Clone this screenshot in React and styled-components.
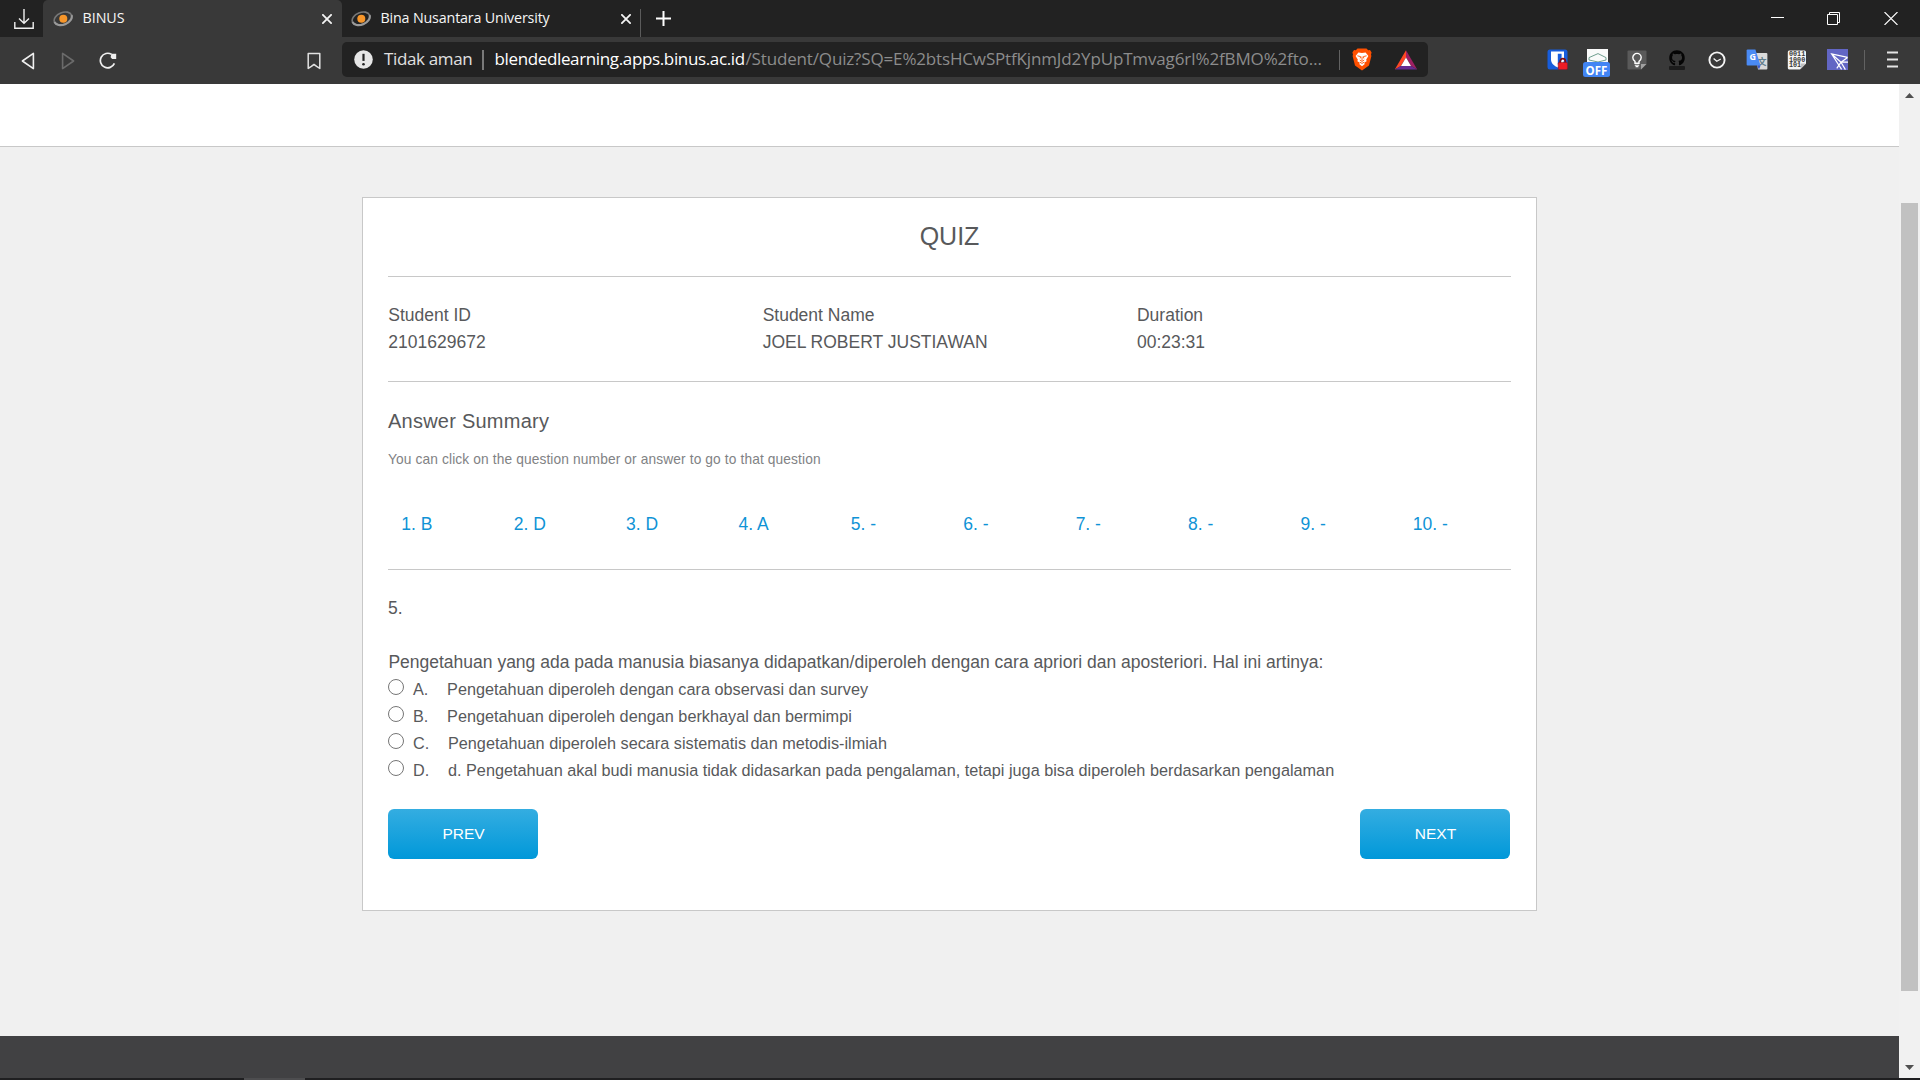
import React from "react";
import styled, { createGlobalStyle } from "styled-components";
import { FaGithub } from "react-icons/fa";

const GlobalStyle = createGlobalStyle`
  * { box-sizing: border-box; }
  html, body { margin: 0; padding: 0; height: 100%; overflow: hidden; }
  body { font-family: "Liberation Sans", Arial, sans-serif; color: #58595b; background: #f0f0f0; }
`;

const Window = styled.div`
  width: 1920px;
  height: 1080px;
  display: flex;
  flex-direction: column;
  overflow: hidden;
`;

/* ---------- browser chrome ---------- */

const TabBar = styled.div`
  display: flex;
  height: 37px;
  background: #222222;
  font-family: "Open Sans", "Noto Sans", sans-serif;
`;

const DownloadSlot = styled.div`
  width: 43px;
  padding: 9px 0 0 14px;
  svg { display: block; }
`;

const Tab = styled.div`
  display: flex;
  align-items: center;
  width: ${(p) => p.$width}px;
  height: 37px;
  padding: 0 ${(p) => p.$padRight}px 0 ${(p) => p.$padLeft}px;
  border-radius: 5px 5px 0 0;
  background: ${(p) => (p.$active ? "#393939" : "transparent")};
  svg { display: block; flex: none; }
`;

const TabTitle = styled.span`
  flex: 1;
  margin-left: 9.5px;
  padding-bottom: 1px;
  font-size: 14.3px;
  line-height: 20px;
  letter-spacing: ${(p) => p.$spacing}px;
  color: #f6f6f6;
  white-space: nowrap;
`;

const TabDivider = styled.div`
  width: 1px;
  height: 28px;
  margin: 9px 0 0 0;
  background: #5b5b5b;
`;

const NewTab = styled.div`
  padding: 11px 0 0 15px;
  svg { display: block; }
`;

const WindowControls = styled.div`
  display: flex;
  gap: 43px;
  margin-left: auto;
  padding: 12px 22px 0 0;
  svg { display: block; }
  svg:last-child { margin-left: 1px; }
`;

const Toolbar = styled.div`
  display: flex;
  align-items: center;
  height: 47px;
  padding: 0 22px 0 8px;
  background: #393939;
  font-family: "Open Sans", "Noto Sans", sans-serif;
  svg { display: block; flex: none; }
`;

const NavSlot = styled.div`
  display: flex;
  justify-content: center;
  width: 40px;
`;

const BookmarkSlot = styled.div`
  display: flex;
  margin-left: 179px;
  width: 34.5px;
`;

const AddressBar = styled.div`
  display: flex;
  align-items: center;
  width: 1086.5px;
  height: 35px;
  margin-bottom: 2px;
  padding: 0 11px 0 12px;
  border-radius: 5px;
  background: #222222;
`;

const AddressText = styled.span`
  flex: none;
  padding-bottom: 1px;
  font-size: 17px;
  line-height: 26px;
  white-space: nowrap;
  letter-spacing: ${(p) => p.$spacing}px;
  color: ${(p) => p.$color};
  width: ${(p) => p.$width}px;
  margin-left: ${(p) => p.$gap || 0}px;
`;

const Separator = styled.div`
  flex: none;
  width: ${(p) => p.$thick || 1}px;
  height: 20px;
  margin: 0 ${(p) => p.$right}px 0 ${(p) => p.$left}px;
  background: ${(p) => p.$color || "#626262"};
`;

const ShieldSlot = styled.div`
  flex: none;
  width: 42px;
`;

const Extensions = styled.div`
  display: flex;
  align-items: center;
  margin-left: auto;
  padding-bottom: 2px;
`;

const ExtensionSlot = styled.div`
  position: relative;
  display: flex;
  justify-content: center;
  align-items: center;
  width: 40px;
  height: 22px;
`;

const Badge = styled.span`
  position: absolute;
  left: 6px;
  top: 13.5px;
  width: 27px;
  height: 15px;
  border-radius: 2.5px;
  background: #4285f4;
  color: #ffffff;
  font-size: 11.5px;
  font-weight: 700;
  line-height: 17px;
  text-align: center;
`;

/* ---------- page ---------- */

const Viewport = styled.div`
  display: flex;
  height: 994px;
`;

const Page = styled.main`
  display: flex;
  flex-direction: column;
  width: 1899px;
  background: #f0f0f0;
`;

const SiteHeader = styled.header`
  height: 63px;
  background: #ffffff;
  border-bottom: 1px solid #c8c8c8;
`;

const Card = styled.section`
  width: 1175px;
  height: 714px;
  margin: 50px auto 0;
  padding: 0 25px;
  border: 1px solid #c8c8c8;
  background: #ffffff;
`;

const Title = styled.h1`
  margin: 0;
  padding-top: 20px;
  height: 79px;
  border-bottom: 1px solid #c8c8c8;
  font-size: 25px;
  font-weight: 400;
  line-height: 36px;
  text-align: center;
`;

const StudentInfo = styled.div`
  display: grid;
  grid-template-columns: repeat(3, 374.33px);
  height: 105px;
  padding: 24.5px 0 0 0.3px;
  border-bottom: 1px solid #c8c8c8;
  font-size: 17.5px;
  line-height: 27px;
`;

const Summary = styled.div`
  height: 188px;
  padding-top: 24px;
  border-bottom: 1px solid #c8c8c8;
`;

const SummaryTitle = styled.h2`
  margin: 0;
  font-size: 20px;
  font-weight: 400;
  line-height: 30px;
  letter-spacing: 0.24px;
`;

const SummaryHint = styled.p`
  margin: 14px 0 0;
  font-size: 13.75px;
  line-height: 20px;
  letter-spacing: 0.12px;
  color: #818284;
`;

const AnswerRow = styled.div`
  display: grid;
  grid-template-columns: repeat(10, 112.4px);
  margin-top: 41.4px;
`;

const AnswerLink = styled.a`
  padding-left: 13.3px;
  font-size: 17.5px;
  line-height: 27px;
  color: #0f93d6;
`;

const Question = styled.div`
  padding-top: 25.4px;
  font-size: 17.5px;
  line-height: 27px;
`;

const QuestionText = styled.div`
  padding-left: 0.4px;
`;

const QuestionNumber = styled.div`
  margin-bottom: 27px;
`;

const Option = styled.label`
  display: flex;
  height: 27px;
  font-size: 16.25px;
  line-height: 27px;
  white-space: nowrap;
`;

const Radio = styled.span`
  width: 16px;
  height: 16px;
  margin: 3px 8.9px 0 0;
  border: 1px solid #767676;
  border-radius: 50%;
`;

const OptionLetter = styled.span`
  margin-right: 18.8px;
`;

const Actions = styled.div`
  display: flex;
  justify-content: space-between;
  width: 1122px;
  margin-top: 24.6px;
`;

const ActionButton = styled.button`
  width: 150px;
  height: 50px;
  padding: 0 0 0 1px;
  border: 0;
  border-radius: 6px;
  background: linear-gradient(#34ade1, #0098d9);
  color: #ffffff;
  font: 15.5px/50px "Liberation Sans", Arial, sans-serif;
`;

const Footer = styled.footer`
  height: 42px;
  margin-top: auto;
  background: #414143;
`;

const Scrollbar = styled.div`
  display: flex;
  flex-direction: column;
  align-items: center;
  width: 21px;
  padding: 9px 0 8px;
  background: #f1f1f1;
  svg { display: block; }
`;

const ScrollThumb = styled.div`
  width: 17px;
  height: 788px;
  margin: 105px 0 auto;
  background: #c1c1c1;
`;

const Taskbar = styled.div`
  height: 2px;
  padding-left: 244px;
  background: #1f1f21;
`;

const TaskbarActive = styled.div`
  width: 61px;
  height: 2px;
  background: #4d4d4f;
`;

/* ---------- icons ---------- */

const Favicon = () => (
  <svg width="20" height="17" viewBox="0 0 20 17">
    <g transform="rotate(-22 10 8.5)" fill="none">
      <ellipse cx="10" cy="8.5" rx="9.2" ry="6" stroke="#777777" strokeWidth="1.6" />
      <path d="M19.2 8.5C19 12 15 14.6 10 14.6 5 14.6 1 12 .8 8.5" stroke="#9a9a9a" strokeWidth="2.1" />
    </g>
    <circle cx="10.3" cy="8.8" r="4" fill="#f7962a" />
  </svg>
);

const DownloadIcon = () => (
  <svg width="20" height="20" viewBox="0 0 20 20" fill="none" stroke="#f0f0f0" strokeWidth="1.4">
    <path d="M10 0V14M5 9.5L10 14.3 15 9.5M.8 13V19.3H19.2V13" />
  </svg>
);

const CloseIcon = () => (
  <svg width="10" height="10" viewBox="0 0 10 10" stroke="#f4f4f4" strokeWidth="1.8">
    <path d="M.3 .3L9.7 9.7M9.7 .3L.3 9.7" />
  </svg>
);

const PlusIcon = () => (
  <svg width="15" height="15" viewBox="0 0 15 15" stroke="#ffffff" strokeWidth="2">
    <path d="M7.5 0V15M0 7.5H15" />
  </svg>
);

const MinimizeIcon = () => (
  <svg width="13" height="13" viewBox="0 0 13 13" stroke="#ffffff">
    <path d="M0 5.5H13" />
  </svg>
);

const RestoreIcon = () => (
  <svg width="13" height="13" viewBox="0 0 13 13" fill="none" stroke="#ffffff">
    <path d="M.5 2.5H10.5V12.5H.5ZM2.5 2.5V.5H12.5V10.5H10.5" />
  </svg>
);

const WindowCloseIcon = () => (
  <svg width="14" height="13" viewBox="0 0 14 13" stroke="#ffffff" strokeWidth="1.1">
    <path d="M.5 0L13.5 13M13.5 0L.5 13" />
  </svg>
);

const BackIcon = () => (
  <svg width="14" height="18" viewBox="0 0 14 18" fill="none" stroke="#f0f0f0" strokeWidth="1.6" strokeLinejoin="round">
    <path d="M12.4 1.4V16.6L1.4 9Z" />
  </svg>
);

const ForwardIcon = () => (
  <svg width="14" height="18" viewBox="0 0 14 18" fill="none" stroke="#6b6b6b" strokeWidth="1.6" strokeLinejoin="round">
    <path d="M1.6 1.4V16.6L12.6 9Z" />
  </svg>
);

const ReloadIcon = () => (
  <svg width="18" height="18" viewBox="0 0 18 18" fill="none">
    <path d="M12.6 2.4A7.3 7.3 0 1 0 15.4 11.4" stroke="#f0f0f0" strokeWidth="1.7" />
    <path d="M12.4 1.8H17.2V6.9H13.2L11.6 5.2Z" fill="#f0f0f0" />
  </svg>
);

const BookmarkIcon = () => (
  <svg width="14" height="18" viewBox="0 0 14 18" fill="none" stroke="#e2e2e2" strokeWidth="1.5" strokeLinejoin="round">
    <path d="M1.2 1.4H12.8V16.4L9.6 14.4 7 12.4 4.4 14.4 1.2 16.4Z" />
  </svg>
);

const WarningIcon = () => (
  <svg width="19" height="19" viewBox="0 0 19 19">
    <circle cx="9.5" cy="9.5" r="9.3" fill="#e6e6e6" />
    <path d="M9.5 3.8V10.9" stroke="#222222" strokeWidth="2.2" />
    <circle cx="9.5" cy="14.2" r="1.3" fill="#222222" />
  </svg>
);

const BraveIcon = () => (
  <svg width="20" height="23" viewBox="0 0 20 23">
    <path d="M5.5.5H14.5L16.2 2.2 18 2 19.6 4.6 19 6.6 19.4 8 17 17.4 10 22.6 3 17.4.6 8 1 6.6.4 4.6 2 2 3.8 2.2Z" fill="#ff5000" />
    <path d="M6.4 4.4L10 5 13.6 4.4 16.4 8 14.2 11.6 14.6 13.2 12.4 14.6 12.6 16.2 10 18.3 7.4 16.2 7.6 14.6 5.4 13.2 5.8 11.6 3.6 8Z" fill="#ffffff" />
    <path d="M5.4 7.8L8.6 8.6 8.2 10.4M14.6 7.8L11.4 8.6 11.8 10.4M10 8.6V12.4M7.8 12L10 13.4 12.2 12M7.8 14.2L10 15.4 12.2 14.2" fill="none" stroke="#ff5000" strokeWidth=".9" />
  </svg>
);

const BatIcon = () => (
  <svg width="24" height="20" viewBox="0 0 24 20">
    <path d="M12 .2L.8 19.6 6.8 16 12 7.4Z" fill="#ff4724" />
    <path d="M12 .2L23.2 19.6 17.2 16 12 7.4Z" fill="#9e1f63" />
    <path d="M.8 19.6H23.2L17.2 16H6.8Z" fill="#662d91" />
    <path d="M12 7.4L17 16H7Z" fill="#ffffff" />
  </svg>
);

const VaultIcon = () => (
  <svg width="21" height="21" viewBox="0 0 21 21">
    <rect x=".5" y=".5" width="20" height="20" rx="2.5" fill="#175ddc" />
    <path d="M4 2.5H17V10.5C17 14.5 13.5 17 10.5 18.4 7.5 17 4 14.5 4 10.5Z" fill="#ffffff" />
    <path d="M10.8 4.7H14.6V10.8C14.6 13 12.8 14.6 10.8 15.8Z" fill="#175ddc" />
    <path d="M13.2 14V12.3A2.6 2.6 0 0 1 18.4 12.3V14" fill="none" stroke="#7d0d12" strokeWidth="1.8" />
    <rect x="11.2" y="13.4" width="9.2" height="7.2" rx="1" fill="#ee1c25" stroke="#8f1015" strokeWidth=".6" />
  </svg>
);

const ScanPageIcon = () => (
  <svg width="21" height="21" viewBox="0 0 21 21">
    <rect width="21" height="21" fill="#fafafa" />
    <path d="M2 8.6L11 4.6 19 8.6V11L11 13 2 11Z" fill="none" stroke="#6f9e8f" strokeWidth="1" />
  </svg>
);

const BulbNoteIcon = () => (
  <svg width="20" height="20" viewBox="0 0 20 20">
    <path d="M1.5.5H18.5Q19.5.5 19.5 1.5V14L14 19.5H1.5Q.5 19.5.5 18.5V1.5Q.5.5 1.5.5Z" fill="#5a5a5a" />
    <path d="M19.5 14H14V19.5Z" fill="#a0a0a0" />
    <path d="M8 13.2V11.4C6.4 10.4 5.8 9.2 5.8 7.6A4.2 4.2 0 0 1 14.2 7.6C14.2 9.2 13.6 10.4 12 11.4V13.2Z" fill="none" stroke="#ffffff" strokeWidth="1.4" />
    <path d="M7.8 15.2H12.2M8.6 16.6H11.4" stroke="#ffffff" strokeWidth="1.1" />
  </svg>
);

const GithubStack = styled.div`
  display: flex;
  flex-direction: column;
  align-items: center;
  color: #050505;
`;

const GithubPlate = styled.span`
  width: 16px;
  height: 4px;
  border-radius: 1px;
  background: #1c1c1c;
`;

const ClockIcon = () => (
  <svg width="18" height="18" viewBox="0 0 18 18" fill="none" stroke="#f4f4f4">
    <circle cx="9" cy="9" r="7.6" strokeWidth="1.9" />
    <path d="M5.6 7.4L8.8 10.2 12.8 8" strokeWidth="1.3" />
  </svg>
);

const GoogleLetter = styled.text`
  font: 700 9px "Open Sans", sans-serif;
  fill: #ffffff;
`;

const CjkLetter = styled.text`
  font: 700 9px "Noto Sans CJK SC", sans-serif;
  fill: #607d8b;
`;

const TranslateIcon = () => (
  <svg width="22" height="21" viewBox="0 0 22 21">
    <path d="M9 4H20.4Q21.4 4 21.4 5V19.6Q21.4 20.6 20.4 20.6H12Z" fill="#dadada" />
    <CjkLetter x="11.6" y="15.5">文</CjkLetter>
    <path d="M1.6.4H9.4L14.6 16.4H1.6Q.6 16.4.6 15.4V1.4Q.6.4 1.6.4Z" fill="#4a8af4" />
    <path d="M11 16.4H14.6L13 20.4Z" fill="#3a5bd0" />
    <GoogleLetter x="3.4" y="11.4">G</GoogleLetter>
  </svg>
);

const BinaryDigits = styled.text`
  font: 700 6.8px "Liberation Mono", monospace;
  fill: #3a3a3a;
`;

const BinaryIcon = () => (
  <svg width="20" height="20" viewBox="0 0 20 20">
    <path d="M2 .4H17.6Q19 .4 19 2V13.4L13 19.4H2Q.8 19.4.8 18V2Q.8.4 2 .4Z" fill="#f4f4f4" />
    <BinaryDigits x="1.9" y="6.2">0011</BinaryDigits>
    <BinaryDigits x="1.9" y="11.8">1000</BinaryDigits>
    <BinaryDigits x="1.9" y="17.4">101</BinaryDigits>
    <path d="M19 13.4H13.6V19Z" fill="#c0c0c0" />
  </svg>
);

const PlaneIcon = () => (
  <svg width="21" height="21" viewBox="0 0 21 21">
    <rect width="21" height="21" fill="#6266c4" />
    <path d="M20.6 8.4L4.6 5 14.6 20.4M4.6 5L14 13.2M14 13.2L20.6 8.4M14 13.2L9.8 19.4M14 13.2H21M14 13.2L18.4 20.6" fill="none" stroke="#ffffff" strokeWidth="1.2" />
  </svg>
);

const MenuIcon = () => (
  <svg width="11" height="17" viewBox="0 0 11 17" stroke="#e4e4e4" strokeWidth="2">
    <path d="M0 1.5H11M0 8.5H11M0 15.5H11" />
  </svg>
);

const UpArrow = () => (
  <svg width="9" height="5" viewBox="0 0 9 5"><path d="M0 5L4.5 0 9 5Z" fill="#505050" /></svg>
);

const DownArrow = () => (
  <svg width="9" height="5" viewBox="0 0 9 5"><path d="M0 0L4.5 5 9 0Z" fill="#505050" /></svg>
);

/* ---------- data ---------- */

const student = [
  ["Student ID", "2101629672"],
  ["Student Name", "JOEL ROBERT JUSTIAWAN"],
  ["Duration", "00:23:31"],
];

const answers = ["B", "D", "D", "A", "-", "-", "-", "-", "-", "-"];

const options = [
  ["A.", "Pengetahuan diperoleh dengan cara observasi dan survey"],
  ["B.", "Pengetahuan diperoleh dengan berkhayal dan bermimpi"],
  ["C.", "Pengetahuan diperoleh secara sistematis dan metodis-ilmiah"],
  ["D.", "d. Pengetahuan akal budi manusia tidak didasarkan pada pengalaman, tetapi juga bisa diperoleh berdasarkan pengalaman"],
];

export default function App() {
  return (
    <Window>
      <GlobalStyle />
      <TabBar>
        <DownloadSlot><DownloadIcon /></DownloadSlot>
        <Tab $active $width={299} $padLeft={10} $padRight={10}>
          <Favicon />
          <TabTitle $spacing={-0.05}>BINUS</TabTitle>
          <CloseIcon />
        </Tab>
        <Tab $width={298} $padLeft={9} $padRight={9}>
          <Favicon />
          <TabTitle $spacing={-0.17}>Bina Nusantara University</TabTitle>
          <CloseIcon />
        </Tab>
        <TabDivider />
        <NewTab><PlusIcon /></NewTab>
        <WindowControls>
          <MinimizeIcon />
          <RestoreIcon />
          <WindowCloseIcon />
        </WindowControls>
      </TabBar>
      <Toolbar>
        <NavSlot><BackIcon /></NavSlot>
        <NavSlot><ForwardIcon /></NavSlot>
        <NavSlot><ReloadIcon /></NavSlot>
        <BookmarkSlot><BookmarkIcon /></BookmarkSlot>
        <AddressBar>
          <WarningIcon />
          <AddressText $color="#e0e0e0" $spacing={-0.35} $width={88} $gap={11.5}>Tidak aman</AddressText>
          <Separator $left={9.5} $right={11} $thick={2} $color="#7a7a7a" />
          <AddressText $color="#ffffff" $spacing={-0.36} $width={251}>blendedlearning.apps.binus.ac.id</AddressText>
          <AddressText $color="#8c8c8c" $spacing={-0.155} $width={578.5}>/Student/Quiz?SQ=E%2btsHCwSPtfKjnmJd2YpUpTmvag6rI%2fBMO%2fto…</AddressText>
          <Separator $left={15} $right={12} />
          <ShieldSlot><BraveIcon /></ShieldSlot>
          <BatIcon />
        </AddressBar>
        <Extensions>
          <ExtensionSlot><VaultIcon /></ExtensionSlot>
          <ExtensionSlot><ScanPageIcon /><Badge>OFF</Badge></ExtensionSlot>
          <ExtensionSlot><BulbNoteIcon /></ExtensionSlot>
          <ExtensionSlot>
            <GithubStack><FaGithub size={16} /><GithubPlate /></GithubStack>
          </ExtensionSlot>
          <ExtensionSlot><ClockIcon /></ExtensionSlot>
          <ExtensionSlot><TranslateIcon /></ExtensionSlot>
          <ExtensionSlot><BinaryIcon /></ExtensionSlot>
          <ExtensionSlot><PlaneIcon /></ExtensionSlot>
          <Separator $left={7} $right={22} />
          <MenuIcon />
        </Extensions>
      </Toolbar>

      <Viewport>
        <Page>
          <SiteHeader />
          <Card>
            <Title>QUIZ</Title>
            <StudentInfo>
              {student.map(([label, value]) => (
                <div key={label}>
                  <div>{label}</div>
                  <div>{value}</div>
                </div>
              ))}
            </StudentInfo>
            <Summary>
              <SummaryTitle>Answer Summary</SummaryTitle>
              <SummaryHint>You can click on the question number or answer to go to that question</SummaryHint>
              <AnswerRow>
                {answers.map((a, i) => (
                  <AnswerLink key={i}>{`${i + 1}. ${a}`}</AnswerLink>
                ))}
              </AnswerRow>
            </Summary>
            <Question>
              <QuestionNumber>5.</QuestionNumber>
              <QuestionText>Pengetahuan yang ada pada manusia biasanya didapatkan/diperoleh dengan cara apriori dan aposteriori. Hal ini artinya:</QuestionText>
              {options.map(([letter, text]) => (
                <Option key={letter}>
                  <Radio />
                  <OptionLetter>{letter}</OptionLetter>
                  <span>{text}</span>
                </Option>
              ))}
            </Question>
            <Actions>
              <ActionButton>PREV</ActionButton>
              <ActionButton>NEXT</ActionButton>
            </Actions>
          </Card>
          <Footer />
        </Page>
        <Scrollbar>
          <UpArrow />
          <ScrollThumb />
          <DownArrow />
        </Scrollbar>
      </Viewport>
      <Taskbar><TaskbarActive /></Taskbar>
    </Window>
  );
}
